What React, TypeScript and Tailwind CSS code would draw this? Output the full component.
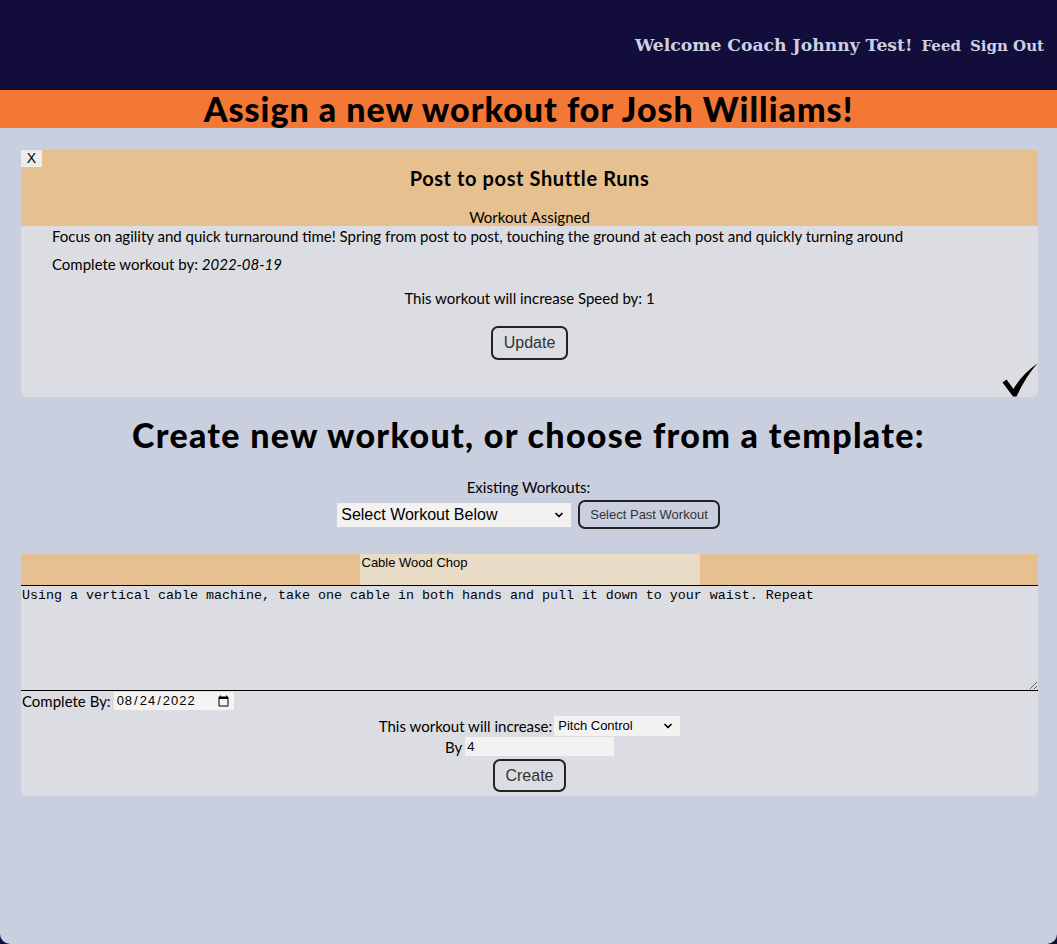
import { ChevronDown } from "lucide-react";

const gill = "font-['Lato','Open_Sans',sans-serif]";
const arial = "font-['Liberation_Sans',Arial,sans-serif]";

function CheckMark() {
  return (
    <svg width="36" height="34" viewBox="0 0 36 34" className="block">
      <path d="M0.5 19.5 L4.5 16.5 L11.5 26 Q20 11 35.5 0.5 Q24 13 14.5 33.5 L11 33.5 Z" fill="#000" />
    </svg>
  );
}

function FlatSelect({ value, width }: { value: string; width: string }) {
  return (
    <div className={`relative ${width}`}>
      <select
        defaultValue={value}
        className={`${arial} w-full appearance-none bg-[#f3f2f0] text-black outline-none pl-[4px] pr-5 rounded-none border-0`}
      >
        <option>{value}</option>
      </select>
      <ChevronDown className="absolute right-[6px] top-1/2 -translate-y-1/2 w-[12px] h-[12px] pointer-events-none" strokeWidth={3.5} />
    </div>
  );
}

export default function App() {
  return (
    <div className="min-h-screen bg-[#120d3b] flex flex-col">
      {/* top nav */}
      <header className="h-[90px] flex items-center justify-end pr-[13px] gap-[9px] pt-[2px] font-['DejaVu_Serif',Georgia,serif] font-bold text-[#cbd0e2]">
        <span className="text-[17.2px]">Welcome Coach Johnny Test!</span>
        <span className="text-[15px]">Feed</span>
        <span className="text-[15px]">Sign Out</span>
      </header>

      <main className={`${gill} flex-1 bg-[#c9cfdf] rounded-b-[10px] text-black`}>
        <h1 className="bg-[#f37735] h-[38px] leading-[38px] text-center text-[34px] tracking-[1px] font-black">
          Assign a new workout for Josh Williams!
        </h1>

        {/* assigned workout */}
        <section className="ml-[21px] mr-[19px] mt-[22px] bg-[#dcdde2] rounded-b-[6px]">
          <div className="bg-[#e6c08f] h-[76px] flex flex-col">
            <button className={`${arial} self-start w-[21px] h-[17px] bg-[#ededed] text-[14px] leading-[17px] text-black`}>X</button>
            <h3 className="text-center text-[20px] tracking-[0.6px] font-bold leading-[22px]">Post to post Shuttle Runs</h3>
            <p className="text-center text-[15px] leading-[18px] mt-[19px]">Workout Assigned</p>
          </div>
          <p className="pl-[31px] text-[15px] leading-[20px]">
            Focus on agility and quick turnaround time! Spring from post to post, touching the ground at each post and quickly turning around
          </p>
          <p className="pl-[31px] text-[15px] leading-[20px] mt-[8px]">
            Complete workout by: <i>2022-08-19</i>
          </p>
          <p className="text-center text-[15px] leading-[20px] mt-[14px]">This workout will increase Speed by: 1</p>
          <div className="flex justify-center mt-[18px]">
            <button className={`${arial} h-[34px] px-[11px] border-2 border-[#222] rounded-[7px] text-[16px] text-[#333]`}>Update</button>
          </div>
          <div className="flex justify-end mt-[3px]">
            <CheckMark />
          </div>
        </section>

        <h2 className="text-center text-[34px] tracking-[1.3px] font-black leading-[38px] mt-[19px]">
          Create new workout, or choose from a template:
        </h2>

        <p className="text-center text-[15px] leading-[18px] mt-[24px]">Existing Workouts:</p>
        <div className="flex justify-center items-center gap-[7px] mt-[4px]">
          <FlatSelect value="Select Workout Below" width="w-[234px] text-[16px]" />
          <button className={`${arial} h-[29px] px-[10px] border-2 border-[#222] rounded-[7px] text-[13px] text-[#333]`}>
            Select Past Workout
          </button>
        </div>

        {/* new workout form */}
        <section className="ml-[21px] mr-[19px] mt-[25px] bg-[#dcdde2] rounded-b-[6px] pb-[4px]">
          <div className="bg-[#e6c08f] h-[31px] flex justify-center">
            <input
              defaultValue="Cable Wood Chop"
              className={`${arial} w-[340px] h-[31px] bg-[#e8dcc6] text-[13px] px-[2px] pb-[14px] outline-none`}
            />
          </div>
          <textarea
            defaultValue="Using a vertical cable machine, take one cable in both hands and pull it down to your waist. Repeat"
            className="block w-full h-[106px] border-y border-black bg-transparent font-['Liberation_Mono','Courier_New',monospace] text-[13.33px] leading-[16px] px-[1px] pt-[2px] outline-none"
          />
          <div className="flex items-center h-[20px] pl-[1px]">
            <span className="text-[15px] leading-[18px]">Complete By:</span>
            <input
              type="date"
              defaultValue="2022-08-24"
              className={`${arial} ml-[3px] w-[120px] h-[18px] bg-[#f5f4f2] text-[13px] tracking-[1px] px-[2px] outline-none`}
            />
          </div>
          <div className="flex justify-center items-center h-[18px] mt-[6px] gap-[2px]">
            <span className="text-[15px] leading-[18px]">This workout will increase:</span>
            <FlatSelect value="Pitch Control" width="w-[126px] text-[13px]" />
          </div>
          <div className="flex justify-center items-center h-[19px] mt-[2px] gap-[3px]">
            <span className="text-[15px] leading-[18px]">By</span>
            <input defaultValue="4" className={`${arial} w-[149px] h-[19px] bg-[#f3f2f0] text-[13px] px-[2px] outline-none`} />
          </div>
          <div className="flex justify-center mt-[3px]">
            <button className={`${arial} h-[33px] px-[10px] border-2 border-[#222] rounded-[7px] text-[16px] text-[#333]`}>Create</button>
          </div>
        </section>
      </main>
    </div>
  );
}
